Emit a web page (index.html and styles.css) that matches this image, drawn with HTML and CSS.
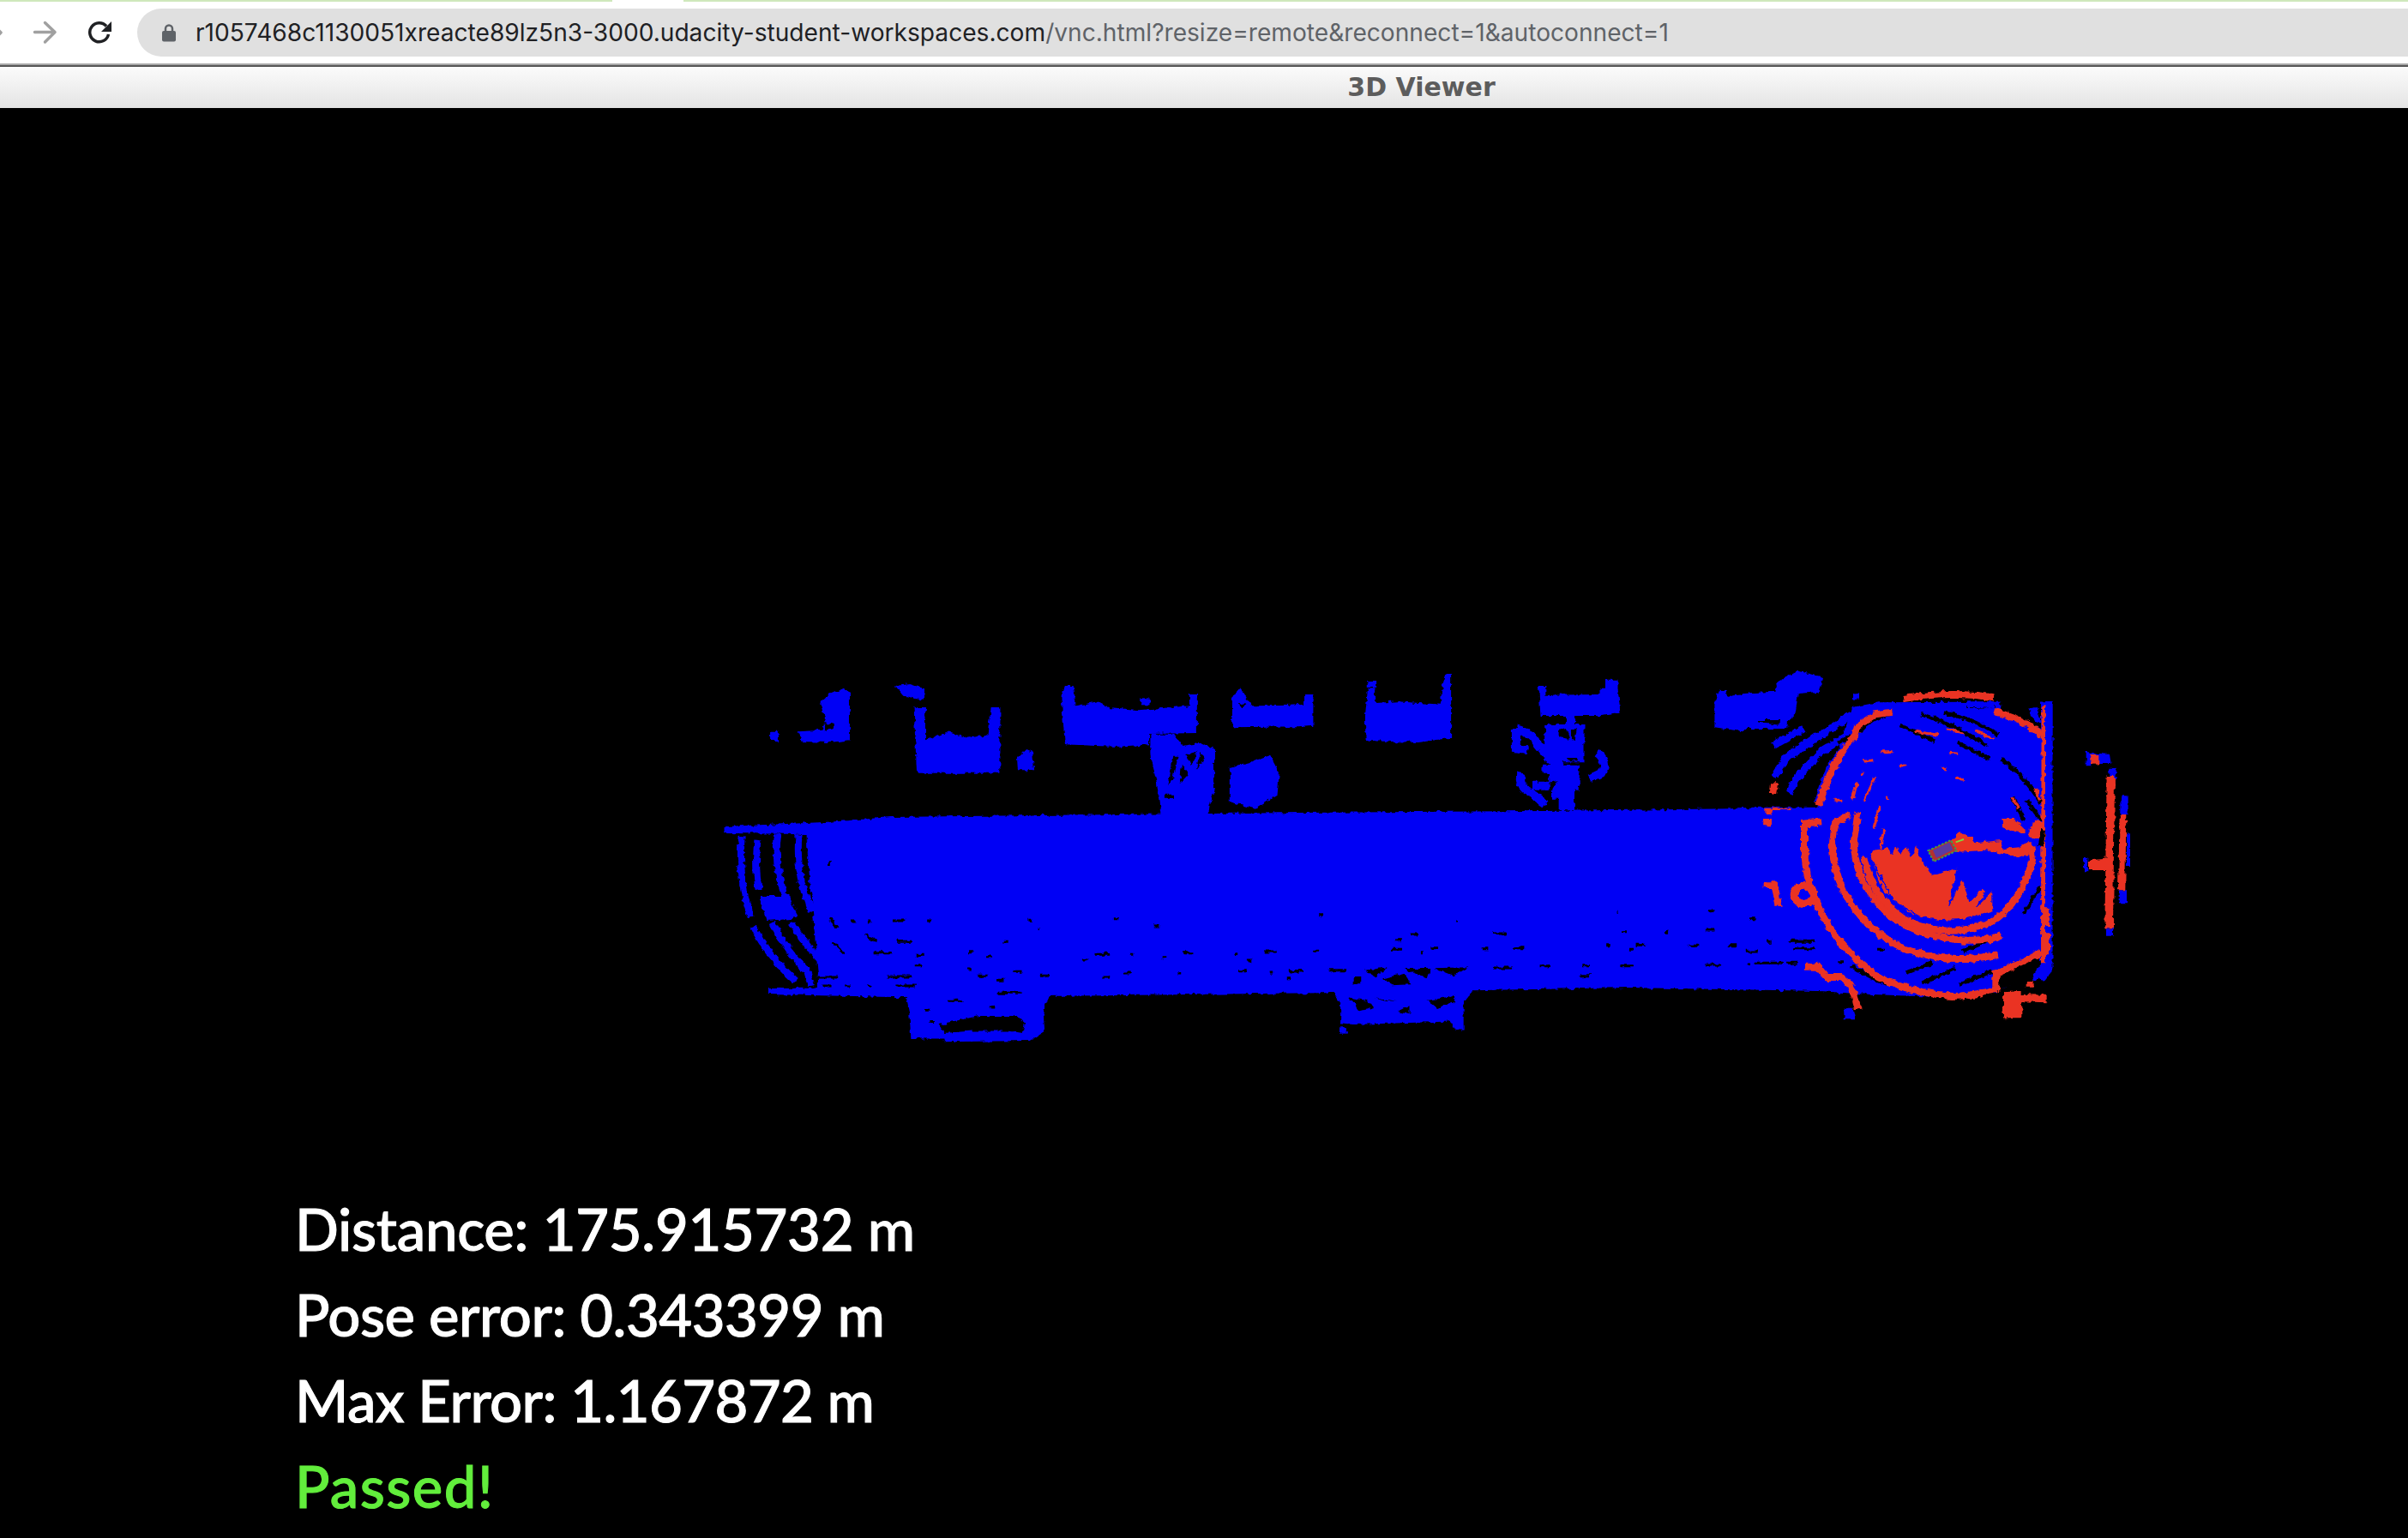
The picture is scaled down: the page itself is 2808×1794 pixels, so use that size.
FILE: index.html
```html
<!DOCTYPE html>
<html lang="en">
<head>
<meta charset="utf-8">
<title>3D Viewer</title>
<link rel="stylesheet" href="styles.css">
</head>
<body>
<div class="tabstrip"><span class="strip-seg strip-left"></span><span class="strip-seg strip-right"></span></div>
<header class="toolbar">
  <svg class="ico ico-back" viewBox="0 0 4 30"><path d="M-6 8L1 15L-6 22"/></svg>
  <svg class="ico ico-fwd" viewBox="0 0 30 30"><path d="M3.5 14.5H26.5M15.5 3.5L27 14.5L15.5 26"/></svg>
  <svg class="ico ico-reload" viewBox="0 0 30 30"><path d="M22 7.5A11 11 0 1 0 24.5 17" /><path class="fill" d="M28 2V14H16Z"/></svg>
  <div class="omnibox">
    <svg class="lock" viewBox="0 0 18 22"><path class="shackle" d="M5 10V6.5a4 4 0 0 1 8 0V10"/><rect x="1" y="9" width="16" height="12.5" rx="2"/></svg>
    <span class="url">r1057468c1130051xreacte89lz5n3-3000.udacity-student-workspaces.com<span class="url-path">/vnc.html?resize=remote&amp;reconnect=1&amp;autoconnect=1</span></span>
  </div>
</header>
<div class="rule"></div>
<div class="titlebar">3D Viewer</div>
<main class="viewer">
  <svg class="cloud" viewBox="0 126 2808 1668" preserveAspectRatio="none">
    <defs>
      <filter id="splat" x="0" y="0" width="100%" height="100%" filterUnits="objectBoundingBox" color-interpolation-filters="sRGB">
        <feTurbulence type="fractalNoise" baseFrequency="0.16" numOctaves="2" seed="4" result="n"/>
        <feDisplacementMap in="SourceGraphic" in2="n" scale="6" xChannelSelector="R" yChannelSelector="G"/>
      </filter>
    </defs>
    <g class="cloud-all">
    <!-- main road body -->
    <path class="b" d="M940 961L1039 953L1300 950L1520 948L1800 946L2125 942V1156L1900 1152L1730 1155L1560 1158L1217 1162L1043 1163L896 1160V1153L1070 1152L1070 1141L950 1140L1005 1137L975 1095L945 1040Z"/>
    <!-- left half of the cloud, coordinates of crop A -->
    <g transform="translate(820 770) scale(.4464 .3333)">
      <path class="b" d="M55 582L230 572L330 566L330 610L55 606Z"/>
      <path class="b" d="M145 825L225 825L235 905L165 912Z"/>
      <g class="bs">
        <path d="M100 615Q92 780 125 900"/><path d="M130 930Q170 1040 240 1122"/>
        <path d="M142 630Q135 720 145 805"/><path d="M180 920Q220 1020 272 1090L282 1140"/>
        <path d="M195 610Q180 760 240 900"/><path d="M232 920Q280 1030 350 1100"/>
        <path d="M250 610Q240 760 285 880"/><path d="M300 970Q340 1040 410 1090"/>
      </g>
      <path class="b" d="M270 600Q270 800 345 960Q380 1030 425 1085L560 1105V1170H300V1105Z"/>
      <g class="holes">
        <path d="M300 1110h50M310 1140h25M370 1140h15M430 1140h10M505 1140h50M480 1107h65M385 915h15M430 915h10M495 912h30M585 915h10M850 910h10M1075 905h10M1180 930h10M875 938h5M505 985h40M785 985h12M445 1025h50M555 1033h20M690 1022h15M740 1037h10M1025 1030h35M990 1050h15M1115 1030h8M1200 1040h8M1255 1025h25M1390 1028h6M1465 1020h30M1420 1050h12M555 1070h15M690 1080h10M810 1090h20M880 1105h25M720 1105h25M765 1120h20M1045 1110h15M1095 1095h20M1240 1095h6M1400 1088h20M1480 1092h10M1525 1115h8M1535 1088h33M330 700v20M330 900l20 40M340 990l30 40M420 960l30 20"/>
      </g>
      <!-- building blocks -->
      <path class="b" d="M175 248H197V282H175ZM248 250L310 245L320 210L305 150L330 120L365 100L383 110V280L330 288L260 285Z"/>
      <path class="b" d="M502 90L540 84L578 100V140L555 135L525 125ZM550 165H580V280L640 252L690 272L745 262L752 165H776V395H558Z"/>
      <path class="b" d="M820 345L845 312L860 320L865 385H822Z"/>
      <path class="b" d="M935 130L945 90H965L972 160L1030 145L1060 165L1140 175L1270 160V120H1290V255L1165 258V295L1080 303L945 295Z"/>
      <path class="b" d="M1143 133H1166V157H1143Z"/>
      <path class="b" d="M1168 260H1230L1250 300L1300 290L1335 310V450L1318 540H1195L1185 430L1168 330Z"/>
      <path class="k" d="M1228 335L1240 335L1222 435L1215 440ZM1250 365L1268 395L1245 430ZM1205 470H1230V485H1205ZM1262 330L1290 320L1275 370ZM1300 320L1310 345L1290 380Z"/>
      <path class="b" d="M1375 375L1445 350L1480 332L1505 395L1500 470L1440 520L1375 495Z"/>
      <path class="b" d="M1382 130L1402 96L1432 160L1568 158V232L1382 235Z"/>
      <path class="k" d="M318 215L340 225V240L320 245ZM1400 150L1420 155L1405 170Z"/>
      <!-- bump 1 -->
      <path class="b" d="M530 1175L905 1175L888 1225L892 1300L855 1332L630 1336L628 1325H543L538 1230Z"/>
      <path class="k" d="M615 1275L720 1245L820 1245L840 1270L835 1305L800 1298L700 1298L630 1305Z"/>
      <path class="holes" d="M640 1192h40M770 1165h60M580 1225h15M590 1265h15M750 1215h10"/>
    </g>
    <!-- middle of the cloud, coordinates of crop B -->
    <g transform="translate(1500 770) scale(.3827 .3333)">
      <path class="b" d="M0 160L55 155V120H82V230L40 235H0Z"/>
      <path class="b" d="M245 72H272V96H245ZM248 100H272V150L340 145L470 155L475 80L485 48H502V272L400 288L242 282L240 200Z"/>
      <path class="b" d="M768 90H790V122L955 120V98H972V68H1010V100L1018 185L960 195H775Z"/>
      <g class="tree">
        <path d="M865 195V260M845 240H895V340H800V240H845M700 240L745 262L775 305L800 340L835 372M700 240V310L735 315"/>
        <path d="M780 380H880V440H750M715 395Q705 440 745 465L790 505M850 440V525M810 470H870"/>
        <path d="M945 325Q985 360 960 395L925 415"/>
      </g>
      <path class="b" d="M830 440H878V525H830ZM790 250H890V345H790ZM800 370H885V430H800Z"/>
      <path class="k" d="M830 245L855 240L862 275L830 270ZM870 240L885 240L880 280H870ZM800 430L825 420L805 465ZM855 345H890V352H855Z"/>
      <path class="b" d="M1305 145L1322 105H1342L1345 125L1495 110L1490 85L1535 50L1568 50V100L1530 100L1528 235L1440 225L1410 235L1390 250L1305 235Z"/>
      <path class="k" d="M1420 200H1505V225L1440 215Z"/>
      <path class="holes" d="M100 893h10M515 915h10M1005 880h5M1285 878h20M1280 945h25M1155 952h8M1020 950h20M630 957h40M380 960h20M335 980h15M85 1018h15M320 1012h35M410 1022h8M440 1007h20M690 1007h35M595 1010h20M975 998h12M1065 997h30M1225 1000h30M1345 998h30M1400 1018h20M1045 1015h12M775 1070h25M630 1077h60M905 1070h20M1020 1070h35M1275 1068h50M1405 1065h15M1445 1065h20M1525 1060h40M890 1106h35M10 1088h40M130 1085h50"/>
      <!-- bump 2 -->
      <path class="b" d="M110 1155L570 1155L540 1200V1295H515L500 1265L205 1275L165 1270V1200L145 1165Z"/>
      <path class="b" d="M162 1285H185V1307H162Z"/>
      <path class="k" d="M240 1085L310 1075L270 1108ZM295 1115L360 1095L380 1135L320 1138ZM360 1080L440 1080L430 1115ZM450 1078L555 1075L510 1105ZM203 1110H228V1132H203ZM190 1180L240 1190L270 1215L225 1228ZM430 1190L515 1175L515 1195L460 1218ZM270 1180L340 1195L300 1190ZM340 1230L375 1210V1240Z"/>
      <path class="r" d="M1452 518H1478V540H1452ZM1455 555H1478V580H1452ZM1478 432H1500L1495 468H1474ZM1452 775H1495L1510 862H1490L1475 798H1452Z"/>
    </g>
    <!-- ring around the car, coordinates of crop C (3x) -->
    <g transform="translate(2040 770) scale(.33333)">
      <path class="b" d="M0 115L95 110L100 75L170 38L258 60L245 110L170 118L160 190L130 215V240L20 240H0V220L100 225L115 210H0Z"/>
      <path class="b" d="M360 115H384V137H360Z"/>
      <g class="bw">
        <path d="M85 298L190 240"/><path d="M150 330L320 215L360 190"/><path d="M85 410L130 340L240 260"/><path d="M140 465L160 420L250 320L350 260"/><path d="M240 500L280 380L340 300"/>
      </g>
      <path class="b" d="M235 515L300 350L340 225L360 165L450 148L1060 145V1080L1030 1120L990 1122L990 1090L860 1170L640 1178L380 1168L0 1140V515Z"/>
      <g class="kw">
        <path d="M385 250Q430 200 500 185"/><path d="M530 228L650 285"/><path d="M600 190Q700 215 830 300"/><path d="M680 185Q780 200 870 262"/><path d="M730 290L840 345"/><path d="M880 345Q960 400 1020 500"/>
        <path d="M310 290L355 265"/><path d="M970 490L1020 560"/><path d="M920 480L960 560"/>
        <path d="M960 885L1020 790"/><path d="M745 1020L860 970"/><path d="M355 1068Q420 1110 480 1135"/><path d="M545 1095L640 1060"/><path d="M605 1130L720 1078"/><path d="M735 1135L850 1088"/>
      </g>
      <path class="k" d="M860 1165L1000 1100L1030 1130L1060 1130V1300H700V1185ZM870 1095L1010 1030L1020 1060L990 1100L870 1160ZM760 155H860V168L760 168ZM880 130H1025V145H880ZM880 145H1020V240L880 175Z"/>
      <path class="b" d="M762 145H858V168L762 165ZM975 170L1005 165L1020 220L1000 215ZM1030 145H1060V310L1030 310Z"/>
      <path class="holes" d="M0 905h20M0 1020h30M20 1060h100M130 1060h40M150 1010h80M140 985h90M60 985h20M310 1055h20M450 1012h20"/>
      <!-- red returns -->
      <g class="rl">
        <path d="M540 135Q700 108 855 130"/>
        <path d="M242 510Q290 350 370 262L378 232L440 190L500 182"/>
        <path d="M252 565L192 572L192 660Q195 760 235 850Q300 1000 450 1110Q570 1165 710 1176Q800 1175 862 1150L862 1098L1022 1024"/>
        <path d="M855 180Q950 200 1025 262"/>
        <path class="t" d="M580 250L660 262M690 243L750 255M790 248L860 275"/>
        <path class="t" d="M700 322L730 325M670 376L690 385M720 414L750 418M525 368L550 370M1000 450L1015 490M920 480L940 520"/>
        <path d="M350 540L300 570L290 650Q300 860 500 990Q650 1070 870 1032"/>
        <path d="M380 530L365 640Q370 790 500 900Q650 1000 850 975L880 960"/>
        <path d="M400 690Q430 840 560 915Q700 980 850 915Q950 850 990 700L985 650"/>
        <path class="t" d="M460 320L500 320M400 355L430 350M390 400L400 395M360 490L375 430M400 495L440 410M455 510L435 590M470 590L458 660M480 480L485 490M298 490L325 490"/>
      </g>
      <path class="r" d="M425 690L430 670L470 660L485 655L500 685L510 650L525 680L550 655L565 690L585 650L600 700L640 755L725 728L695 870L745 765L770 850L815 800L825 810L790 870L850 810V880L770 905L650 910L560 885L470 810Z"/>
      <path class="ts" d="M425 690L500 840L600 900L710 918L830 885"/>
      <path class="r" d="M885 555H925L965 590V605L920 600L885 585ZM980 590L1000 560L1030 570V625L980 620Z"/>
      <path class="r" d="M700 640L735 600L775 620L790 640L880 630L890 660L945 655L965 640H990V660L960 690L900 680L820 665L725 672Z"/>
      <!-- circle blob -->
      <path class="rc" d="M190 790a34 30 0 1 0 2 62a34 30 0 0 0 -2 -62Z"/>
      <!-- wall -->
      <path class="r" d="M1022 165L1035 155V1060H1020Z"/>
      <path class="b" d="M1035 145H1060V1075L1035 1100Z"/>
      <path class="r" d="M1028 865H1050V930H1028ZM1028 955H1050V1030H1028Z"/>
      <path class="k" d="M1020 590L1035 600L1028 650H1010Z"/>
      <!-- bottom features -->
      <path class="hook" d="M195 1073H240L270 1110H320Q360 1125 380 1222"/>
      <path class="b" d="M330 1220H365L372 1258H332Z"/>
      <path class="r" d="M888 1162L950 1158V1170L1040 1172V1198L955 1195V1252H888ZM968 1125H995V1145H968Z"/>
      <path class="b" d="M990 1100L1040 1070L1045 1080L1025 1115L995 1122Z"/>
      <!-- left marks -->
      <path class="r" d="M50 775H95L113 860H92L78 798H50ZM50 555H78V580H48ZM55 518H145V522H80V540H55ZM75 430H100L95 467H72Z"/>
      <!-- right hand wall -->
      <path class="b" d="M1178 320L1205 325L1260 330L1265 360H1195V370H1178Z"/>
      <path class="r" d="M1195 330H1222V362H1195Z"/>
      <path class="b" d="M1258 380H1283V420H1258ZM1248 940H1272V965H1248ZM1300 475H1325V540H1300ZM1295 805H1320V850H1295ZM1320 610H1332V720H1320Z"/>
      <path class="r" d="M1250 405H1278L1272 940H1243ZM1295 540H1318L1315 805H1290ZM1188 700L1250 695V735H1188Z"/>
      <path class="b" d="M1170 690H1183V742H1170Z"/>
    </g>
    </g>
    <!-- car sits on top, undisturbed -->
    <g transform="translate(2040 770) scale(.33333)">
      <path class="car-outer" d="M625 667L705 630L725 667L645 705Z"/>
      <path class="car" d="M642 665L700 638L712 664L654 692Z"/>
      <path class="dash" d="M722 637L750 627"/>
    </g>
  </svg>
  <div class="stats">
    <p class="stat stat-dist">Distance: 175.915732 m</p>
    <p class="stat stat-pose">Pose error: 0.343399 m</p>
    <p class="stat stat-max">Max Error: 1.167872 m</p>
    <p class="stat stat-pass">Passed!</p>
  </div>
</main>
</body>
</html>
```
FILE: styles.css
```css
* { box-sizing: border-box; }
html, body { margin: 0; height: 100%; }
body {
  width: 2808px;
  height: 1794px;
  overflow: hidden;
  display: flex;
  flex-direction: column;
  background: #000;
  font-family: "Liberation Sans", sans-serif;
}
.tabstrip {
  height: 2px;
  display: flex;
  background: #fff;
  flex: none;
}
.strip-seg { background: #cfe8bb; height: 2px; }
.strip-left { width: 714px; }
.strip-right { flex: 1; margin-left: 83px; }
.toolbar {
  height: 72px;
  flex: none;
  background: #fff;
  display: flex;
  align-items: flex-start;
  padding-top: 8px;
  overflow: hidden;
}
.ico { flex: none; fill: none; stroke-width: 3.5; stroke-linecap: round; stroke-linejoin: round; }
.ico-back { width: 4px; height: 30px; margin-top: 13px; stroke: #a0a0a0; }
.ico-fwd { width: 30px; height: 30px; margin: 13px 0 0 33px; stroke: #a0a0a0; }
.ico-reload { width: 30px; height: 30px; margin: 13px 0 0 35px; stroke: #202124; stroke-linecap: butt; }
.ico-reload .fill { fill: #202124; stroke: none; }
.omnibox {
  margin-left: 28px;
  flex: 1;
  height: 56px;
  background: #e0e0e0;
  border-radius: 28px 0 0 28px;
  display: flex;
  align-items: center;
  padding-left: 28px;
}
.lock { width: 18px; height: 22px; flex: none; fill: #5f6368; }
.lock .shackle { fill: none; stroke: #5f6368; stroke-width: 2.5; }
.url {
  margin-left: 22px;
  font-family: "Inter", "Liberation Sans", sans-serif;
  font-size: 28.14px;
  color: #202124;
  white-space: nowrap;
}
.url-path { color: #5f6368; }
.rule {
  height: 4px;
  flex: none;
  border-top: 2px solid #a8a8a8;
  border-bottom: 2px solid #555;
}
.titlebar {
  height: 48px;
  flex: none;
  background: linear-gradient(#fbfbfb, #e4e4e4);
  text-align: center;
  padding-left: 507px;
  font-family: "DejaVu Sans", sans-serif;
  font-weight: 700;
  font-size: 30px;
  line-height: 48px;
  color: #5c5c5c;
}
.viewer {
  flex: 1;
  position: relative;
  background: #000;
  display: flex;
  flex-direction: column;
  justify-content: flex-end;
  padding: 0 0 11px 344px;
}
.cloud {
  position: absolute;
  inset: 0;
  width: 100%;
  height: 100%;
}
.cloud-all { filter: url(#splat); }
.b { fill: #0000f5; }
.k { fill: #000; }
.r { fill: #ea3323; }
.rc { fill: none; stroke: #ea3323; stroke-width: 26; }
.hook { fill: none; stroke: #ea3323; stroke-width: 24; }
.tree path { fill: none; stroke: #0000f5; stroke-width: 10px; vector-effect: non-scaling-stroke; }
.bs path { fill: none; stroke: #0000f5; stroke-width: 8; vector-effect: non-scaling-stroke; }
.bw path { fill: none; stroke: #0000f5; stroke-width: 26; }
.kw path { fill: none; stroke: #000; stroke-width: 14; }
.rl path { fill: none; stroke: #ea3323; stroke-width: 24; }
.rl path.t { stroke-width: 9; }
.ts { fill: none; stroke: #0000f5; stroke-width: 5; }
.holes { fill: none; stroke: #000; stroke-width: 3; vector-effect: non-scaling-stroke; }
.holes path { fill: none; stroke: #000; stroke-width: 3; vector-effect: non-scaling-stroke; }
.car-outer { fill: #b5302f; stroke: #3d9a50; stroke-width: 6; stroke-dasharray: 8 5; }
.car { fill: #5a3aa0; }
.dash { fill: none; stroke: #7ddb3a; stroke-width: 6; }
.stats { position: relative; }
.stat {
  margin: 0;
  font-family: "Lato", sans-serif;
  font-weight: 500;
  font-size: 67px;
  line-height: 100px;
  color: #fff;
  white-space: nowrap;
  -webkit-text-stroke: 1px currentColor;
}
.stat-dist { letter-spacing: -0.3px; }
.stat-pose { letter-spacing: -0.5px; }
.stat-max { letter-spacing: -0.6px; }
.stat-pass { color: #62ee3c; letter-spacing: 1.4px; }
```
